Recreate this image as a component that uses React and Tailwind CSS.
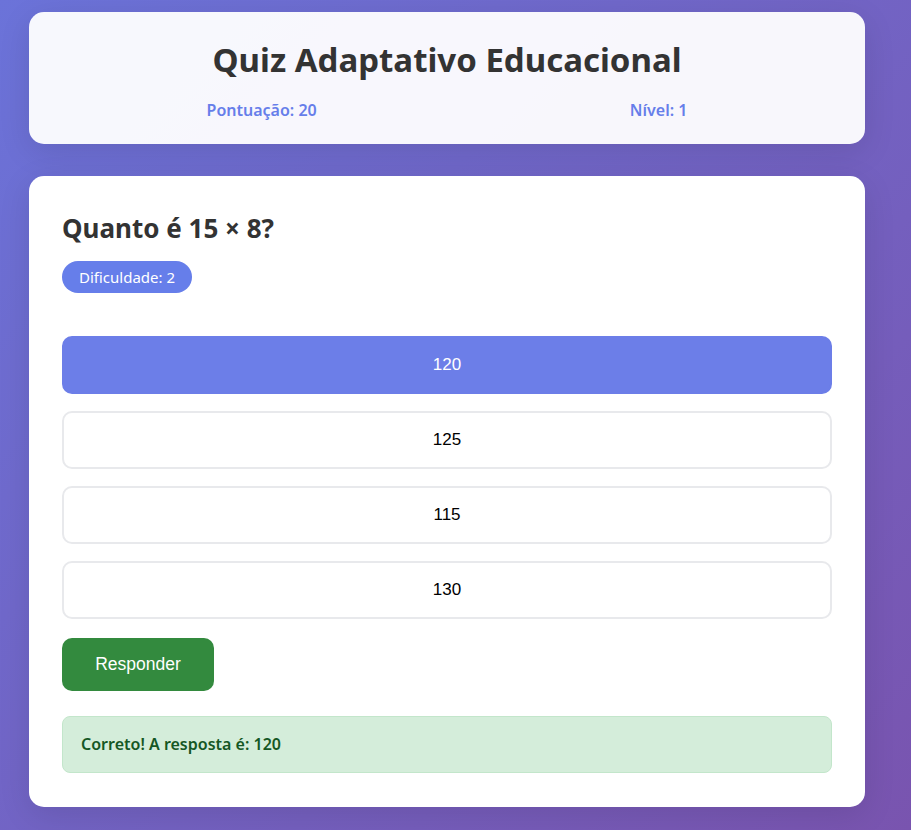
import React, { useState } from 'react';

const options = ['120', '125', '115', '130'];

const App = () => {
    const [selected, setSelected] = useState('120');

    return (
        <div
            className="min-h-screen w-full bg-[linear-gradient(135deg,#6b73d9_0%,#7954af_100%)] pt-[12px] pb-[24px]"
            style={{ fontFamily: '"Noto Sans", "Open Sans", sans-serif' }}
        >
            <div className="ml-[29px] w-[836px] flex flex-col gap-[32px]">
                {/* Header */}
                <div className="rounded-[15px] bg-white/95 px-[21px] pt-[26px] pb-[23px] shadow-[0_8px_32px_rgba(0,0,0,0.1)]">
                    <h1 className="text-center text-[33px] leading-[44px] font-bold text-[#333]">
                        Quiz Adaptativo Educacional
                    </h1>
                    <div className="mt-[17px] flex justify-around text-[16px] leading-[22px] font-semibold text-[#667eea]">
                        <span>Pontuação: 20</span>
                        <span>Nível: 1</span>
                    </div>
                </div>

                {/* Question card */}
                <div className="rounded-[15px] bg-white px-[33px] pt-[33px] pb-[34px] shadow-[0_8px_32px_rgba(0,0,0,0.1)]">
                    <h2 className="text-[26px] leading-[38px] font-bold text-[#333]">Quanto é 15 × 8?</h2>
                    <span className="mt-[14px] inline-block rounded-full bg-[#667eea] px-[17px] py-[5px] text-[15px] leading-[22px] text-white">
                        Dificuldade: 2
                    </span>

                    <div className="mt-[43px] flex flex-col gap-[17px]">
                        {options.map((opt) => (
                            <button
                                key={opt}
                                type="button"
                                onClick={() => setSelected(opt)}
                                className={`h-[58px] w-full rounded-[10px] border-2 text-[17px] ${
                                    selected === opt
                                        ? 'border-[#6c7ee8] bg-[#6c7ee8] text-white'
                                        : 'border-[#e8e9ec] bg-white text-black'
                                }`}
                                style={{ fontFamily: '"Liberation Sans", Arial, sans-serif' }}
                            >
                                {opt}
                            </button>
                        ))}
                    </div>

                    <button
                        type="button"
                        className="mt-[19px] h-[53px] w-[152px] rounded-[10px] bg-[#338a3e] text-[17.5px] text-white"
                        style={{ fontFamily: '"Liberation Sans", Arial, sans-serif' }}
                    >
                        Responder
                    </button>

                    <div className="mt-[25px] rounded-[8px] border border-[#c3e6cb] bg-[#d4edda] px-[18px] py-[16px] text-[16px] leading-[23px] font-semibold text-[#155724]">
                        Correto! A resposta é: 120
                    </div>
                </div>
            </div>
        </div>
    );
};

export default App;
